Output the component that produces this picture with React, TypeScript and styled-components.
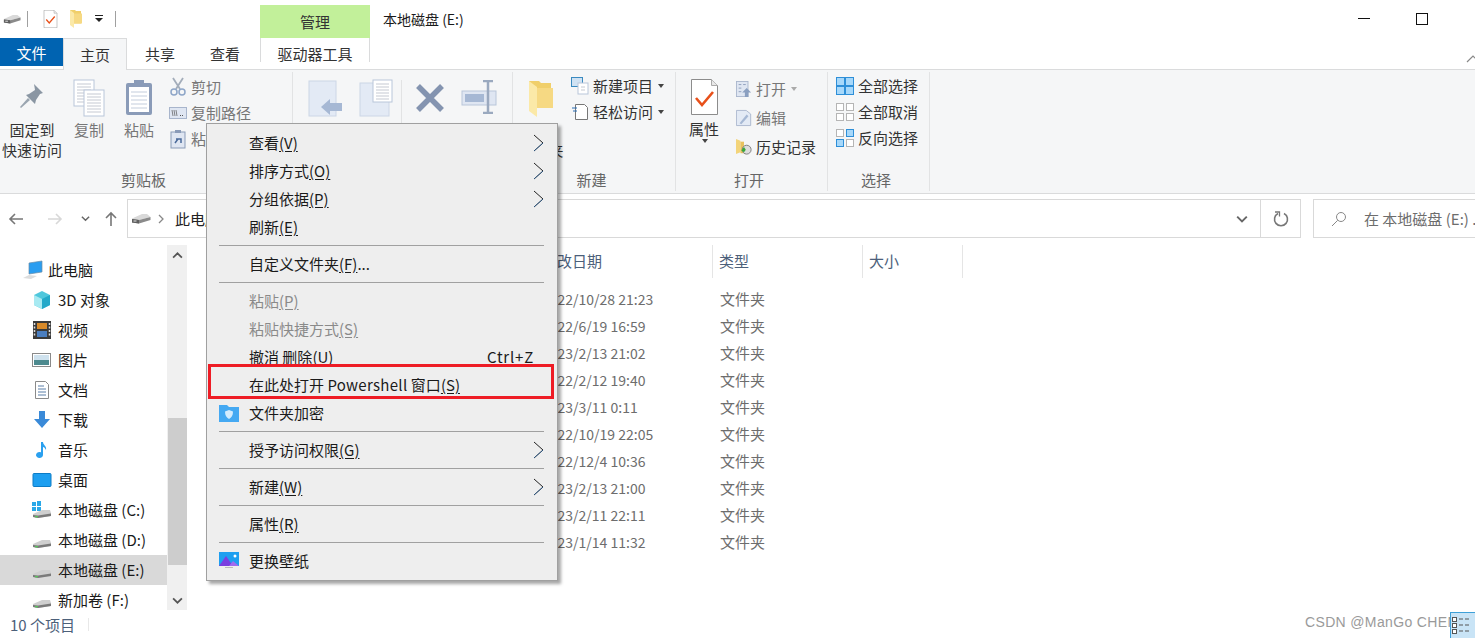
import React from "react";
import styled, { createGlobalStyle } from "styled-components";

const Global = createGlobalStyle`
  html, body { margin: 0; padding: 0; background: #fff; }
  * { box-sizing: border-box; }
`;
const Win = styled.div`
  position: relative; width: 1475px; height: 638px; overflow: hidden; background: #fff; color: #1a1a1a;
  font: 15px/20px "Noto Sans CJK SC", "Noto Sans", sans-serif; display: flex; flex-direction: column;
`;
const TitleBar = styled.div`display: flex; height: 38px; align-items: flex-start; flex: none;`;
const Quick = styled.div`display: flex; align-items: center; width: 260px; height: 38px; padding: 0 0 0 3px;`;
const QSep = styled.i<{ $ml: number }>`width: 1px; height: 16px; background: #a0a0a0; margin-left: ${p => p.$ml}px; flex: none;`;
const Gap = styled.span<{ $w: number }>`width: ${p => p.$w}px; flex: none;`;
const Ctx = styled.div`width: 110px; height: 33px; margin-top: 5px; background: #c2f09a; text-align: center; line-height: 34px; color: #333;`;
const Title = styled.div`margin: 9px 0 0 13px; font-size: 14px; flex: 1;`;
const WinBtns = styled.div`display: flex; width: 125px; padding: 13px 0 0 8px; align-items: flex-start; gap: 46px;`;
const MinLine = styled.i`width: 12px; height: 1px; margin-top: 5px; background: #111;`;
const MaxBox = styled.i`width: 12px; height: 12px; border: 1px solid #111;`;

const TabRow = styled.div`display: flex; height: 32px; border-bottom: 1px solid #dadbdc; flex: none;`;
const FileTab = styled.div`width: 63px; height: 28px; background: #0063b1; color: #fff; text-align: center; line-height: 29px;`;
const Tab = styled.div<{ $on?: boolean; $w: number }>`
  width: ${p => p.$w}px; height: ${p => p.$on ? 32 : 31}px; text-align: center; line-height: 31px; color: #333;
  ${p => p.$on ? "background:#f5f6f7;border:1px solid #dadbdc;border-bottom:0;" : ""}
`;
const CtxTab = styled(Tab)`border-left: 1px solid #dadbdc; border-right: 1px solid #dadbdc; margin-left: 3px; height: 24px; line-height: 31px;`;
const Collapse = styled.div`margin: 10px -5px 0 auto; width: 14px; height: 10px;`;

const Ribbon = styled.div`display: flex; height: 124px; background: #f5f6f7; border-bottom: 1px solid #dadbdc; flex: none;`;
const Group = styled.div<{ $w: number }>`
  width: ${p => p.$w}px; height: 119px; margin-top: 2px; border-right: 1px solid #e2e3e4; display: flex; flex-direction: column; flex: none;
`;
const GroupBody = styled.div`flex: 1; display: flex; min-height: 0;`;
const GroupLabel = styled.div`height: 20px; padding: 0 5px 1px 0; text-align: center; color: #666; line-height: 18px; flex: none;`;
const Big = styled.div<{ $w: number; $dis?: boolean; $pt?: number; $ml?: number }>`
  width: ${p => p.$w}px; display: flex; flex-direction: column; align-items: center; padding-top: ${p => p.$pt ?? 5}px;
  margin-left: ${p => p.$ml ?? 0}px; text-align: center; line-height: 20px; color: ${p => p.$dis ? "#777" : "#333"}; flex: none; white-space: nowrap;
`;
const BigLabel = styled.div<{ $mt: number }>`margin-top: ${p => p.$mt}px;`;
const VLine = styled.i`width: 1px; height: 48px; margin: 8px 0 0 0; background: #e2e3e4; flex: none;`;
const SmallCol = styled.div<{ $ml?: number; $gap?: number; $pt?: number }>`
  display: flex; flex-direction: column; margin-left: ${p => p.$ml ?? 0}px; gap: ${p => p.$gap ?? 6}px; padding-top: ${p => p.$pt ?? 5}px;
`;
const Small = styled.div<{ $dis?: boolean }>`
  display: flex; align-items: center; gap: 4px; height: 20px; white-space: nowrap; color: ${p => p.$dis ? "#777" : "#333"};
`;
const Caret = styled.i<{ $light?: boolean }>`
  width: 0; height: 0; border: 3.5px solid transparent; border-top: 4px solid ${p => p.$light ? "#aaa" : "#444"}; border-bottom: 0; margin-left: 1px; flex: none;
`;

const AddrRow = styled.div`display: flex; height: 51px; padding-top: 5px; align-items: flex-start; background: #fff; flex: none;`;
const Navs = styled.div`display: flex; width: 127px; height: 39px; align-items: center; padding-left: 8px;`;
const NavBtn = styled.span<{ $ml?: number }>`display: flex; margin-left: ${p => p.$ml ?? 0}px;`;
const AddrBox = styled.div`
  width: 1174px; height: 39px; border: 1px solid #d9d9d9; display: flex; align-items: center; padding-left: 3px; flex: none;
`;
const Crumb = styled.span`margin-left: 11px; flex: 1; color: #222;`;
const AddrEnd = styled.div`width: 40px; height: 37px; border-left: 1px solid #d9d9d9; display: flex; align-items: center; justify-content: center; flex: none;`;
const ChevWrap = styled.div`width: 12px; margin-right: 12px; display: flex;`;
const Search = styled.div`
  flex: 1; min-width: 0; margin-left: 12px; height: 39px; border: 1px solid #d9d9d9; border-right: 0; display: flex; align-items: center; padding-left: 17px;
  color: #6d6d6d; gap: 17px; white-space: nowrap; overflow: hidden;
  svg { flex: none; }
`;

const Main = styled.div`flex: 1; display: flex; min-height: 0;`;
const Nav = styled.div`width: 167px; padding-top: 10px; display: flex; flex-direction: column; flex: none;`;
const NavItem = styled.div<{ $sel?: boolean; $in?: boolean }>`
  height: 30px; display: flex; align-items: center; flex: none; white-space: nowrap; color: #1a1a1a;
  padding-left: ${p => p.$in ? 32 : 23}px; gap: ${p => p.$in ? 6 : 4}px; background: ${p => p.$sel ? "#d9d9d9" : "transparent"};
`;
const NavIcon = styled.span`width: 20px; display: flex; justify-content: center; flex: none;`;
const Scroll = styled.div`width: 20px; background: #f0f0f0; height: 365px; flex: none; display: flex; flex-direction: column; align-items: center;`;
const ScrollThumb = styled.div`width: 19px; height: 147px; background: #cdcdcd; margin-top: 153px; flex: none;`;
const ScrollCap = styled.div<{ $mt?: number }>`height: 20px; flex: none; display: flex; align-items: center; justify-content: center; margin-top: ${p => p.$mt ?? 0}px;`;

const List = styled.div`flex: 1; padding-left: 353px;`;
const Head = styled.div`display: flex; height: 33px; color: #4c607a; line-height: 31px;`;
const Col = styled.div<{ $w: number; $pl: number }>`width: ${p => p.$w}px; padding-left: ${p => p.$pl}px; border-right: 1px solid #e5e5e5; white-space: nowrap; flex: none;`;
const Rows = styled.div`margin-top: 9px;`;
const Row = styled.div`display: flex; height: 27px; line-height: 24px; color: #6d6d6d;`;
const DateCell = styled.div`width: 180px; font-size: 14px; padding-left: 2px; white-space: nowrap; flex: none;`;
const TypeCell = styled.div`width: 100px; white-space: nowrap; flex: none;`;

const Status = styled.div`height: 27px; display: flex; align-items: center; padding-left: 10px; color: #4c607a; flex: none; position: relative;`;
const StatusSep = styled.i`width: 1px; height: 13px; background: #e8e8e8; margin-left: 13px;`;
const Watermark = styled.div`
  position: absolute; right: 0; top: 1px; width: 170px; font: 14px/20px "Liberation Sans", sans-serif; color: #9a9a9a; letter-spacing: .35px; white-space: nowrap;
`;
const ViewBtn = styled.div`
  position: absolute; right: 0; bottom: 0; width: 25px; height: 26px; background: #c9e4f6; border: 1px solid #3ea0d8; border-right: 0; border-bottom: 0;
`;

const Menu = styled.div`
  position: absolute; left: 206px; top: 123px; width: 352px; height: 458px; background: #eeeeee; border: 1px solid #a0a0a0;
  box-shadow: 3px 3px 3px rgba(0,0,0,.35); padding-top: 5px; color: #1a1a1a;
`;
const MI = styled.div<{ $dis?: boolean }>`
  position: relative; height: 28px; display: flex; align-items: center; padding-left: 42px; color: ${p => p.$dis ? "#8a8a8a" : "#1a1a1a"}; white-space: pre;
`;
const MSep = styled.div`height: 1px; background: #a0a0a0; margin: 4px 13px 4px 12px;`;
const Key = styled.span`position: absolute; right: 23px; top: 4px; letter-spacing: .8px;`;
const MArrow = styled.svg`position: absolute; right: 13px; top: 5px;`;
const MIcon = styled.div`position: absolute; left: 12px; top: 4px; width: 20px; height: 20px;`;
const RedBox = styled.div`
  position: absolute; left: 1px; top: 240px; width: 346px; height: 35px; border: 3px solid #ee1c25; pointer-events: none;
`;
const U = styled.span`text-decoration: underline; text-underline-offset: 2px;`;
const Wide = styled.span`letter-spacing: .3px;`;

const Drive = ({ s = 20 }: { s?: number }) => (
  <svg width={s} height={s * 0.55} viewBox="0 0 20 11">
    <path d="M1 5.500 L11 1 H16 L19.500 4 L8 7 L1 6.500Z" fill="#d9d9d9" />
    <path d="M1 6 L8 7 L19.500 4 V7 L8 10.500 L1 9.500Z" fill="#8a8a8a" />
    <path d="M1 6 L8 7 V10.500 L1 9.500Z" fill="#5f5f5f" />
    <rect x="2.500" y="7.500" width="3" height="1" fill="#e8e8e8" />
  </svg>
);
const NavDrive = ({ win }: { win?: boolean }) => (
  <svg width="20" height="20" viewBox="0 0 20 20">
    {win && <g fill="#29a8e8"><rect x="0" y="2" width="4" height="4" /><rect x="5" y="1" width="4" height="5" /><rect x="0" y="7" width="4" height="4" /><rect x="5" y="7" width="4" height="4" /></g>}
    <path d="M1 14 L10 10 L18 10 L19 13 V16 L6 18 L1 17Z" fill="#cfcfcf" />
    <path d="M1 15 L6 15.5 L19 13.5 V16 L6 18 L1 17Z" fill="#7a7a7a" />
    <rect x="3" y="16" width="3" height="1.3" fill="#58c25b" />
  </svg>
);
const Folder = ({ w = 12, h = 18 }: { w?: number; h?: number }) => (
  <svg width={w} height={h} viewBox="0 0 12 18">
    <path d="M0 0h5l1 1h5v12.500H0z" fill="#f0cf6b" />
    <path d="M0 0l4 3v15l-4-3z" fill="#fbe9a8" />
    <path d="M4 3.500h8v10H4z" fill="#f6d983" />
  </svg>
);
const Check = ({ w, h }: { w: number; h: number }) => (
  <svg width={w} height={h} viewBox="0 0 27 36">
    <path d="M.5.5h20l6 6v29H.5z" fill="#fff" stroke="#8c8c8c" />
    <path d="M20.500.5v6h6" fill="#e8e8e8" stroke="#aaa" />
    <path d="M5 19l6 7 11-13" fill="none" stroke="#e8501a" strokeWidth="2.6" />
  </svg>
);
const Page = ({ x, y, w, h }: { x: number; y: number; w: number; h: number }) => (
  <g>
    <rect x={x} y={y} width={w} height={h} fill="#fff" stroke="#b9c6da" />
    {Array.from({ length: Math.floor((h - 4) / 3) }).map((_, i) => (
      <path key={i} d={`M${x + 3} ${y + 4 + i * 3}h${w - 6}`} stroke="#c5c9d2" />
    ))}
  </g>
);
const Chevron = ({ c = "#666", s = 10, up }: { c?: string; s?: number; up?: boolean }) => (
  <svg width={s} height={s} viewBox="0 0 10 10"><path d={up ? "M1 7l4-4 4 4" : "M1 3l4 4 4-4"} fill="none" stroke={c} strokeWidth="1.6" /></svg>
);
const Arrow = ({ d, c }: { d: string; c: string }) => (
  <svg width="16" height="16" viewBox="0 0 16 16"><path d={d} fill="none" stroke={c} strokeWidth="1.6" /></svg>
);
const SubArrow = () => (
  <MArrow width="11" height="18" viewBox="0 0 11 18"><path d="M1 1l9 8-9 8" fill="none" stroke="#222" strokeWidth="1" /><path d="M1 17l9-8" stroke="#2a6fb5" strokeWidth=".6" /></MArrow>
);

const dates = ["2022/10/28 21:23", "2022/6/19 16:59", "2023/2/13 21:02", "2022/2/12 19:40", "2023/3/11 0:11", "2022/10/19 22:05", "2022/12/4 10:36", "2023/2/13 21:00", "2023/2/11 22:11", "2023/1/14 11:32"];

const navIcons: [string, React.ReactNode][] = [
  ["3D 对象", <svg width="20" height="20" viewBox="0 0 20 20"><path d="M10 1l8 4v10l-8 4-8-4V5z" fill="#4fc7dc" /><path d="M10 9l8-4v10l-8 4z" fill="#23a9c9" /><path d="M2 5l8 4v10l-8-4z" fill="#a8eaf2" /></svg>],
  ["视频", <svg width="20" height="20" viewBox="0 0 20 20"><rect x="1" y="1" width="18" height="18" fill="#3a3a3a" /><rect x="5" y="3" width="10" height="6" fill="#d88a2a" /><rect x="5" y="11" width="10" height="6" fill="#4a7ec0" /><path d="M2.500 3v14M17.500 3v14" stroke="#ddd" strokeWidth="1.5" strokeDasharray="2 1.5" /></svg>],
  ["图片", <svg width="20" height="16" viewBox="0 0 20 16"><rect x=".5" y="1.500" width="18" height="13" fill="#fff" stroke="#8a8a8a" /><rect x="2" y="3" width="15" height="5" fill="#cfe2ee" /><rect x="2" y="8" width="15" height="5" fill="#4d8a8f" /></svg>],
  ["文档", <svg width="20" height="20" viewBox="0 0 20 20"><path d="M3.500 1.500h10l3 3v14h-13z" fill="#fff" stroke="#8a8a8a" /><path d="M6 6h6M6 9h8M6 12h8M6 15h8" stroke="#5a7fa8" /></svg>],
  ["下载", <svg width="20" height="20" viewBox="0 0 20 20"><path d="M7 1h6v8h5l-8 9-8-9h5z" fill="#3a8ad8" /></svg>],
  ["音乐", <svg width="20" height="20" viewBox="0 0 20 20"><path d="M9 2h2c0 3 4 4 3 8-1-2-2-3-3-3v8a3.500 3 0 1 1-2-2.700z" fill="#2aa0ef" /></svg>],
  ["桌面", <svg width="20" height="16" viewBox="0 0 20 16"><rect x="1" y="1.500" width="18" height="13" rx="1" fill="#1e9ff0" stroke="#0d7cc6" /></svg>],
];

export default function App() {
  return (
    <Win>
      <Global />
      <TitleBar>
        <Quick>
          <Drive s={18} />
          <QSep $ml={6} />
          <Gap $w={15} />
          <Check w={15} h={18} />
          <Gap $w={12} />
          <Folder />
          <Gap $w={13} />
          <svg width="8" height="8" viewBox="0 0 8 8"><path d="M0 0h8v1H0zM0 3h8L4 7z" fill="#222" /></svg>
          <QSep $ml={12} />
        </Quick>
        <Ctx>管理</Ctx>
        <Title>本地磁盘 (E:)</Title>
        <WinBtns><MinLine /><MaxBox /></WinBtns>
      </TitleBar>
      <TabRow>
        <FileTab>文件</FileTab>
        <Tab $on $w={64}>主页</Tab>
        <Tab $w={66}>共享</Tab>
        <Tab $w={64}>查看</Tab>
        <CtxTab $w={110}>驱动器工具</CtxTab>
        <Collapse><svg width="14" height="10" viewBox="0 0 14 10"><path d="M1 8l6-6 6 6" fill="none" stroke="#888" strokeWidth="1.2" /></svg></Collapse>
      </TabRow>
      <Ribbon>
        <Group $w={293}>
          <GroupBody>
            <Big $w={64} $pt={9}>
              <svg width="30" height="30" viewBox="0 0 30 30"><path d="M17 3l9 9-3 1-4 6-1 4-9-9 3-1 6-4z" fill="#8a96a3" /><path d="M11 17l-8 9 1 1 9-8z" fill="#9aa5b0" /></svg>
              <BigLabel $mt={9}>固定到<br />快速访问</BigLabel>
            </Big>
            <Big $w={50} $dis $pt={7}>
              <svg width="32" height="38" viewBox="0 0 32 38"><Page x={1} y={1} w={20} h={26} /><Page x={11} y={11} w={20} h={26} /></svg>
              <BigLabel $mt={3}>复制</BigLabel>
            </Big>
            <Big $w={50} $dis $pt={7}>
              <svg width="30" height="38" viewBox="0 0 30 38"><rect x="2" y="4" width="26" height="32" rx="2" fill="#8a9bb8" /><rect x="5" y="8" width="20" height="25" fill="#fff" /><path d="M7 13h16M7 17h16M7 21h16M7 25h16M7 29h16" stroke="#c3cddc" /><rect x="10" y="1" width="10" height="6" fill="#8a9bb8" /></svg>
              <BigLabel $mt={3}>粘贴</BigLabel>
            </Big>
            <SmallCol $ml={5}>
              <Small $dis><svg width="18" height="20" viewBox="0 0 18 20"><path d="M4 1l7 11M14 1L7 12" stroke="#a3adba" strokeWidth="1.8" /><circle cx="5" cy="15" r="3" fill="none" stroke="#8ea6c8" strokeWidth="1.5" /><circle cx="13" cy="15" r="3" fill="none" stroke="#8ea6c8" strokeWidth="1.5" /></svg>剪切</Small>
              <Small $dis><svg width="18" height="12" viewBox="0 0 18 12"><rect x=".5" y=".5" width="17" height="11" fill="#dfe6f2" stroke="#a8b5cc" /><path d="M3 3l1 6M5 3l1 6M7 3l1 6" stroke="#555" strokeWidth=".7" /><path d="M11 8.500h4" stroke="#555" strokeDasharray="1 1" /></svg>复制路径</Small>
              <Small $dis><svg width="18" height="20" viewBox="0 0 18 20"><rect x="2" y="3" width="14" height="16" fill="#dfe6f2" stroke="#8a9bb8" /><rect x="6" y="1" width="6" height="3" fill="#8a9bb8" /><path d="M6 14l3-4h-2h5v4" fill="none" stroke="#4a6a9a" strokeWidth="1.5" /></svg>粘贴快捷方式</Small>
            </SmallCol>
          </GroupBody>
          <GroupLabel>剪贴板</GroupLabel>
        </Group>
        <Group $w={220}>
          <GroupBody>
            <Big $w={50} $ml={8} $pt={7}>
              <svg width="36" height="38" viewBox="0 0 36 38"><rect x="1" y="2" width="27" height="35" fill="#e3eaf5" stroke="#ccd6e6" /><path d="M13 28l9-8v4h12v8H22v4z" fill="#a6b8d4" /></svg>
            </Big>
            <Big $w={50} $pt={7}>
              <svg width="34" height="38" viewBox="0 0 34 38"><rect x="1" y="4" width="29" height="33" fill="#e3eaf5" stroke="#ccd6e6" /><Page x={14} y={1} w={19} h={22} /></svg>
            </Big>
            <VLine />
            <Big $w={46} $ml={5} $pt={10}>
              <svg width="32" height="32" viewBox="0 0 32 32"><path d="M4 4l24 24M28 4L4 28" stroke="#8494b0" strokeWidth="5.5" /></svg>
            </Big>
            <Big $w={50} $ml={2} $pt={8}>
              <svg width="38" height="34" viewBox="0 0 38 34"><rect x="1" y="11" width="34" height="14" fill="#dfe6f2" stroke="#b9c6da" /><rect x="4" y="14" width="19" height="8" fill="#a6b8d4" /><path d="M27 1v32M22 1h10M22 33h10" stroke="#9aa9bf" strokeWidth="2.5" /></svg>
            </Big>
          </GroupBody>
          <GroupLabel />
        </Group>
        <Group $w={163}>
          <GroupBody>
            <Big $w={50} $ml={3} $pt={9}>
              <Folder w={24} h={36} />
              <BigLabel $mt={3}>新建<br />文件夹</BigLabel>
            </Big>
            <SmallCol $ml={5} $pt={4}>
              <Small><svg width="18" height="18" viewBox="0 0 18 18"><rect x=".5" y=".5" width="11" height="9" fill="#cfe2f3" stroke="#3a8ac0" /><Page x={7} y={6} w={10} h={11} /></svg>新建项目<Caret /></Small>
              <Small><svg width="18" height="18" viewBox="0 0 18 18"><path d="M4.500 1.500h9l3 3v12h-12z" fill="#fff" stroke="#777" /><path d="M1 5h5M2 8h4" stroke="#2a6fb5" /></svg>轻松访问<Caret /></Small>
            </SmallCol>
          </GroupBody>
          <GroupLabel>新建</GroupLabel>
        </Group>
        <Group $w={152}>
          <GroupBody>
            <Big $w={56} $pt={7}>
              <Check w={27} h={36} />
              <BigLabel $mt={4}>属性</BigLabel>
              <Caret />
            </Big>
            <SmallCol $ml={4} $gap={9} $pt={7}>
              <Small $dis><svg width="16" height="18" viewBox="0 0 18 20"><rect x=".5" y="1.500" width="13" height="17" fill="#dfe6f2" stroke="#a8b5cc" /><path d="M3 5h3M8 5h3M3 9h3M3 13h3" stroke="#8a9bb8" /><path d="M12 9l5 5h-3v5h-4v-5H7z" fill="#8a9fc0" /></svg>打开<Caret $light /></Small>
              <Small $dis><svg width="16" height="18" viewBox="0 0 18 20"><path d="M.5 1.500h11l5 4v13H.5z" fill="#e3eaf5" stroke="#a8b5cc" /><path d="M4 16l8-10 2 2-8 9z" fill="#a6b8d4" /></svg>编辑</Small>
              <Small><svg width="16" height="18" viewBox="0 0 18 20"><path d="M0 1l5 2v13l-5 2z" fill="#f3d47a" /><path d="M5 4h4v13H5z" fill="#e8c25e" /><circle cx="12" cy="13" r="5" fill="#ddd" stroke="#777" /><path d="M6 14l3-4 2 3-2 3z" fill="#3aa83a" /></svg>历史记录</Small>
            </SmallCol>
          </GroupBody>
          <GroupLabel>打开</GroupLabel>
        </Group>
        <Group $w={102}>
          <GroupBody>
            <SmallCol $ml={8} $pt={4}>
              <Small><svg width="18" height="18" viewBox="0 0 18 18"><rect x="0" y="0" width="18" height="18" fill="#2e8fd8" /><g fill="#a7d8fa"><rect x="1" y="1" width="7" height="7" /><rect x="10" y="1" width="7" height="7" /><rect x="1" y="10" width="7" height="7" /><rect x="10" y="10" width="7" height="7" /></g></svg>全部选择</Small>
              <Small><svg width="18" height="18" viewBox="0 0 18 18"><g fill="#fff" stroke="#b5b5b5"><rect x=".5" y=".5" width="7" height="7" /><rect x="10.500" y=".5" width="7" height="7" /><rect x=".5" y="10.500" width="7" height="7" /><rect x="10.500" y="10.500" width="7" height="7" /></g></svg>全部取消</Small>
              <Small><svg width="18" height="18" viewBox="0 0 18 18"><g fill="#fff" stroke="#b5b5b5"><rect x=".5" y=".5" width="7" height="7" /><rect x="10.500" y="10.500" width="7" height="7" /></g><g fill="#a7d8fa" stroke="#2e8fd8"><rect x="10.500" y=".5" width="7" height="7" /><rect x=".5" y="10.500" width="7" height="7" /></g></svg>反向选择</Small>
            </SmallCol>
          </GroupBody>
          <GroupLabel>选择</GroupLabel>
        </Group>
      </Ribbon>
      <AddrRow>
        <Navs>
          <NavBtn><Arrow d="M15 8H2M7 3L2 8l5 5" c="#777" /></NavBtn>
          <NavBtn $ml={23}><Arrow d="M1 8h13M9 3l5 5-5 5" c="#d8d8d8" /></NavBtn>
          <NavBtn $ml={18}><Chevron s={9} /></NavBtn>
          <NavBtn $ml={13}><Arrow d="M8 15V2M3 7l5-5 5 5" c="#777" /></NavBtn>
        </Navs>
        <AddrBox>
          <Drive s={20} />
          <NavBtn $ml={7}><svg width="6" height="10" viewBox="0 0 6 10"><path d="M1 1l4 4-4 4" fill="none" stroke="#888" strokeWidth="1.3" /></svg></NavBtn>
          <Crumb>此电脑</Crumb>
          <ChevWrap><Chevron s={12} /></ChevWrap>
          <AddrEnd><svg width="16" height="16" viewBox="0 0 16 16"><path d="M5 2.500A6.500 6.500 0 1 0 11 2.500" fill="none" stroke="#777" strokeWidth="1.6" /><path d="M2 1h4.500v4.500" fill="none" stroke="#777" strokeWidth="1.3" /></svg></AddrEnd>
        </AddrBox>
        <Search>
          <svg width="16" height="16" viewBox="0 0 16 16"><circle cx="10" cy="6" r="4.500" fill="none" stroke="#888" /><path d="M6.700 9.300L1 15" stroke="#888" /></svg>
          在 本地磁盘 (E:) ...
        </Search>
      </AddrRow>
      <Main>
        <Nav>
          <NavItem>
            <svg width="21" height="20" viewBox="0 0 21 20"><path d="M6 3l13-2v11l-13 2z" fill="#2a9df0" stroke="#6a8ca8" strokeWidth=".7" /><path d="M0 18l6-3 8 1-6 3z" fill="#ddd" /></svg>
            此电脑
          </NavItem>
          {navIcons.map(([k, icon]) => (
            <NavItem key={k} $in><NavIcon>{icon}</NavIcon>{k}</NavItem>
          ))}
          <NavItem $in><NavIcon><NavDrive win /></NavIcon>本地磁盘 (C:)</NavItem>
          <NavItem $in><NavIcon><NavDrive /></NavIcon>本地磁盘 (D:)</NavItem>
          <NavItem $in $sel><NavIcon><NavDrive /></NavIcon>本地磁盘 (E:)</NavItem>
          <NavItem $in><NavIcon><NavDrive /></NavIcon>新加卷 (F:)</NavItem>
        </Nav>
        <Scroll>
          <ScrollCap><Chevron s={11} c="#555" up /></ScrollCap>
          <ScrollThumb />
          <ScrollCap $mt={25}><Chevron s={11} c="#555" /></ScrollCap>
        </Scroll>
        <List>
          <Head>
            <Col $w={173} $pl={2}>修改日期</Col>
            <Col $w={150} $pl={6}>类型</Col>
            <Col $w={100} $pl={6}>大小</Col>
          </Head>
          <Rows>
            {dates.map(d => (
              <Row key={d}><DateCell>{d}</DateCell><TypeCell>文件夹</TypeCell></Row>
            ))}
          </Rows>
        </List>
      </Main>
      <Status>
        10 个项目<StatusSep />
        <Watermark>CSDN @ManGo CHEN</Watermark>
        <ViewBtn>
          <svg width="24" height="26" viewBox="0 0 24 26"><g stroke="#555" fill="#fff"><rect x="1.500" y="4.500" width="4" height="4" /><rect x="1.500" y="10.500" width="4" height="4" /><rect x="1.500" y="16.500" width="4" height="4" /></g><path d="M8 6h4M14 6h4M8 12h4M14 12h4M8 18h4M14 18h4" stroke="#555" /></svg>
        </ViewBtn>
      </Status>
      <Menu>
        <MI>查看<U>(V)</U><SubArrow /></MI>
        <MI>排序方式<U>(O)</U><SubArrow /></MI>
        <MI>分组依据<U>(P)</U><SubArrow /></MI>
        <MI>刷新<U>(E)</U></MI>
        <MSep />
        <MI>自定义文件夹<U>(F)</U>...</MI>
        <MSep />
        <MI $dis>粘贴<U>(P)</U></MI>
        <MI $dis>粘贴快捷方式<U>(S)</U></MI>
        <MI>撤消 删除<U>(U)</U><Key>Ctrl+Z</Key></MI>
        <MI>在此处打开 <Wide>Powershell</Wide> 窗口<U>(S)</U></MI>
        <MI>
          <MIcon><svg width="20" height="20" viewBox="0 0 20 20"><path d="M0 2h8l2 2h10v15H0z" fill="#45a9f2" /><path d="M10 7l4 1.500c0 4-1.500 6-4 7.500-2.500-1.500-4-3.500-4-7.500z" fill="#d5ecfd" /></svg></MIcon>
          文件夹加密
        </MI>
        <MSep />
        <MI>授予访问权限<U>(G)</U><SubArrow /></MI>
        <MSep />
        <MI>新建<U>(W)</U><SubArrow /></MI>
        <MSep />
        <MI>属性<U>(R)</U></MI>
        <MSep />
        <MI>
          <MIcon><svg width="20" height="20" viewBox="0 0 20 20"><rect x="0" y="1" width="20" height="14" fill="#1e9ff0" /><path d="M0 15l7-10 7 10z" fill="#7a3ee0" /><path d="M10 15l4-5 6 5z" fill="#a06af0" /><circle cx="16" cy="5" r="1.500" fill="#fff" /><rect x="6" y="16" width="8" height="1" fill="#bbb" /></svg></MIcon>
          更换壁纸
        </MI>
        <RedBox />
      </Menu>
    </Win>
  );
}
